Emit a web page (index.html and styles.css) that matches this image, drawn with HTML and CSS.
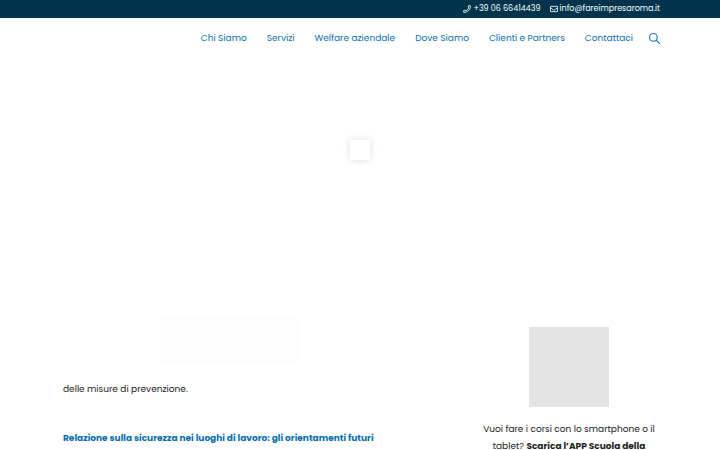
FILE: index.html
```
<!DOCTYPE html>
<html lang="it">
<head>
<meta charset="utf-8">
<meta name="viewport" content="width=device-width, initial-scale=1">
<title>Fare Impresa Roma</title>
<link rel="stylesheet" href="styles.css">
</head>
<body>
<div class="topbar">
  <a class="contact" href="tel:+390666414439"><svg class="contact-icon" viewBox="0 0 512 512" aria-hidden="true"><path d="M370 28 482 56C482 296 296 482 56 482L28 370l104-48 48 58c88-42 158-112 200-200l-58-48z"/></svg>+39 06 66414439</a>
  <a class="contact" href="mailto:info@fareimpresaroma.it"><svg class="contact-icon" viewBox="0 0 512 512" aria-hidden="true"><rect x="28" y="88" width="456" height="336" rx="30"/><path d="M28 170l180 136c30 24 66 24 96 0l180-136"/></svg>info@fareimpresaroma.it</a>
</div>
<header class="header">
  <nav class="nav" aria-label="Menu principale">
    <a href="#">Chi Siamo</a>
    <a href="#">Servizi</a>
    <a href="#">Welfare aziendale</a>
    <a href="#">Dove Siamo</a>
    <a href="#">Clienti e Partners</a>
    <a href="#">Contattaci</a>
  </nav>
  <button class="search" type="button" aria-label="Cerca"><svg viewBox="0 0 20 20" aria-hidden="true"><circle cx="8" cy="8" r="7"/><path d="M13 13l6 6"/></svg></button>
</header>
<div class="hero"><div class="loader"></div></div>
<main class="content">
  <article class="article">
    <div class="picture"></div>
    <p>delle misure di prevenzione.</p>
    <h2><a href="#">Relazione sulla sicurezza nei luoghi di lavoro: gli orientamenti futuri</a></h2>
  </article>
  <aside class="sidebar">
    <div class="app-image"></div>
    <p>Vuoi fare i corsi con lo smartphone o il tablet? <strong>Scarica l’APP Scuola della</strong></p>
  </aside>
</main>
</body>
</html>
```
FILE: styles.css
```
* { box-sizing: border-box; }
body {
  margin: 0;
  background: #fff;
  color: #222;
  font: 9px/17px Poppins, Inter, sans-serif;
}
a { color: #0a6fae; text-decoration: none; }
p, h2 { margin: 0; }
.topbar {
  display: flex;
  justify-content: flex-end;
  gap: 9px;
  padding: 0 60px;
  background: #00344d;
  font-size: 8px;
  line-height: 18px;
}
.contact {
  display: flex;
  align-items: center;
  gap: 2px;
  color: #fff;
}
.contact-icon {
  width: 8px;
  height: 8px;
  fill: none;
  stroke: currentColor;
  stroke-width: 54;
  stroke-linejoin: round;
}
.header {
  display: flex;
  align-items: center;
  justify-content: flex-end;
  gap: 16px;
  height: 40px;
  padding: 0 60px;
}
.nav { display: flex; gap: 20px; }
.search {
  display: flex;
  padding: 0;
  border: 0;
  background: none;
  color: #0a6fae;
}
.search svg {
  width: 11px;
  height: 11px;
  fill: none;
  stroke: currentColor;
  stroke-width: 2;
  stroke-linecap: round;
}
.hero {
  display: flex;
  justify-content: center;
  height: 259px;
  padding-top: 82px;
}
.loader {
  width: 20px;
  height: 20px;
  background: #fff;
  box-shadow: 0 0 8px rgba(0, 0, 0, 0.14);
}
.content {
  display: grid;
  grid-template-columns: 1fr 184px;
  gap: 80px;
  padding: 0 59px 0 63px;
}
.picture {
  width: 138px;
  height: 46px;
  margin: 0 auto 18px;
  background: #fdfdfd;
}
.article h2 {
  margin-top: 32px;
  font-size: 9px;
  line-height: 17px;
}
.sidebar { text-align: center; }
.app-image {
  width: 80px;
  height: 80px;
  margin: 10px auto 14px;
  background: #e4e4e4;
}
```
